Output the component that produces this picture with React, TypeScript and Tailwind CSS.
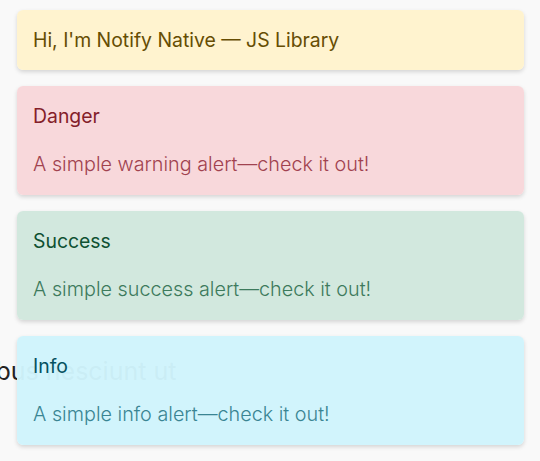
const ALERTS = [
  {
    title: 'Danger',
    text: 'A simple warning alert—check it out!',
    box: 'bg-[#f8d7da]/[0.97]',
    head: 'text-[#842029]',
    body: 'text-[#a1424f]',
  },
  {
    title: 'Success',
    text: 'A simple success alert—check it out!',
    box: 'bg-[#d1e7dd]/[0.97]',
    head: 'text-[#0f5132]',
    body: 'text-[#3d7a5c]',
  },
  {
    title: 'Info',
    text: 'A simple info alert—check it out!',
    box: 'bg-[#cff4fc]/[0.97]',
    head: 'text-[#055160]',
    body: 'text-[#3a8593]',
  },
]

export default function App() {
  return (
    <div className="relative h-[461px] w-[540px] overflow-hidden bg-[#f9f9f9]">
      {/* page content behind the toasts */}
      <p className="ml-[-288px] pt-[355px] whitespace-nowrap font-['Inter',sans-serif] text-[25px] leading-[32px] text-[#222]">
        Nam libero tempore, quibus nesciunt ut
      </p>

      <div className="absolute left-[17px] top-[10px] flex w-[507px] flex-col gap-4">
        <div className="rounded-md bg-[#fff3cd]/[0.97] px-4 py-4 shadow-[0_2px_4px_rgba(0,0,0,0.15)]">
          <p className="font-['Inter',sans-serif] text-[19.4px] leading-[28px] text-[#664d03]">
            Hi, I'm Notify Native — JS Library
          </p>
        </div>
        {ALERTS.map((a) => (
          <div
            key={a.title}
            className={`rounded-md px-4 pt-4 pb-[17px] shadow-[0_2px_4px_rgba(0,0,0,0.15)] ${a.box}`}
          >
            <p className={`font-['Inter',sans-serif] text-[19.4px] leading-[28px] ${a.head}`}>{a.title}</p>
            <p className={`mt-5 font-['Inter',sans-serif] text-[19.8px] font-light leading-[28px] ${a.body}`}>
              {a.text}
            </p>
          </div>
        ))}
      </div>
    </div>
  )
}
